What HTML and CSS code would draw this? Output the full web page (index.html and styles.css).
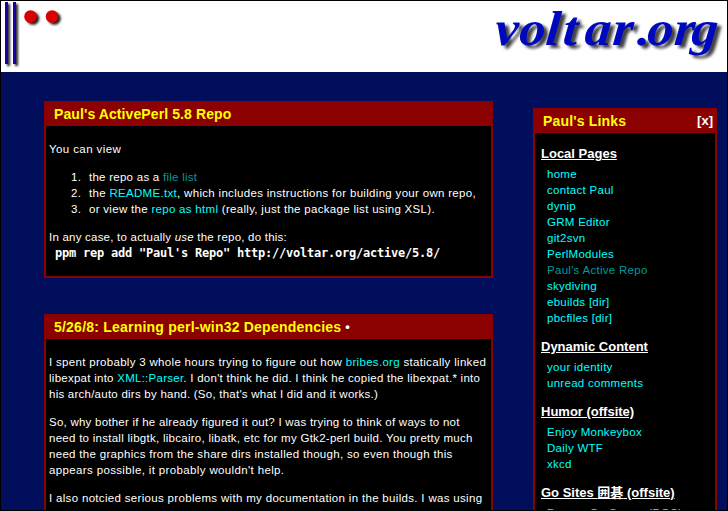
FILE: index.html
```html
<!DOCTYPE html>
<html lang="en">
<head>
<meta charset="utf-8">
<title>voltar.org</title>
<link rel="stylesheet" href="styles.css">
</head>
<body>
<header class="banner">
<svg class="mark" width="70" height="71" viewBox="1 1 70 71" aria-hidden="true">
<defs><filter id="soft"><feGaussianBlur stdDeviation="0.8"/></filter></defs>
<g fill="#222" filter="url(#soft)"><path d="M7 4h3v62H7zM15 4h3v62h-3z"/><circle cx="33" cy="18.500" r="6.300"/><circle cx="54.500" cy="18.500" r="6.300"/></g>
<path fill="#1800a8" d="M5 2h3v62H5zM13 2h3v62h-3z"/>
<g fill="#d80000"><circle cx="30.500" cy="16.500" r="6.300"/><circle cx="52" cy="16.500" r="6.300"/></g>
</svg>
<svg class="logo" width="240" height="71" viewBox="487 1 240 71" role="img" aria-label="voltar.org">
<g class="word">
<text transform="translate(494 45) skewX(-5) scale(1.08 1)" x="0 22.500 47 63 83 109 132 141 166 182">voltar.org</text>
</g>
</svg>
</header>
<div class="page">
<main>
<section class="panel first">
<h2><span class="t1">Paul's ActivePerl 5.8 Repo</span></h2>
<div class="body">
<p><span class="a1">You can view</span></p>
<ol>
<li><span class="a2">the repo as a <a class="seen">file list</a></span></li>
<li><span class="a3">the <a>README.txt</a>, which includes instructions for building your own repo,</span></li>
<li><span class="a4">or view the <a>repo as html</a> (really, just the package list using XSL).</span></li>
</ol>
<p><span class="a5">In any case, to actually <em>use</em> the repo, do this:</span><br><code>ppm rep add "Paul's Repo" http://voltar.org/active/5.8/</code></p>
</div>
</section>
<section class="panel">
<h2><span class="t2">5/26/8: Learning perl-win32 Dependencies</span> <b class="dot">•</b></h2>
<div class="body">
<p><span class="b1">I spent probably 3 whole hours trying to figure out how <a>bribes.org</a> statically linked</span><br>
<span class="b2">libexpat into <a>XML::Parser</a>. I don't think he did. I think he copied the libexpat.* into</span><br>
<span class="b3">his arch/auto dirs by hand. (So, that's what I did and it works.)</span></p>
<p><span class="b4">So, why bother if he already figured it out? I was trying to think of ways to not</span><br>
<span class="b5">need to install libgtk, libcairo, libatk, etc for my Gtk2-perl build. You pretty much</span><br>
<span class="b6">need the graphics from the share dirs installed though, so even though this</span><br>
<span class="b7">appears possible, it probably wouldn't help.</span></p>
<p><span class="b8">I also notcied serious problems with my documentation in the builds. I was using</span></p>
</div>
</section>
</main>
<aside class="panel">
<h2><span class="t3">Paul's Links</span><b class="close">[x]</b></h2>
<div class="links">
<h3>Local Pages</h3>
<ul><li>home</li><li>contact Paul</li><li>dynip</li><li>GRM Editor</li><li>git2svn</li><li>PerlModules</li><li class="seen">Paul's Active Repo</li><li>skydiving</li><li>ebuilds [dir]</li><li>pbcfiles [dir]</li></ul>
<h3>Dynamic Content</h3>
<ul><li>your identity</li><li>unread comments</li></ul>
<h3>Humor (offsite)</h3>
<ul><li>Enjoy Monkeybox</li><li>Daily WTF</li><li>xkcd</li></ul>
<h3>Go Sites <span lang="ja">囲碁</span> (offsite)</h3>
<ul><li>Dragon Go Server (DGS)</li></ul>
</div>
</aside>
</div>
</body>
</html>
```

FILE: styles.css
```css
* { box-sizing: border-box; }
body {
  margin: 0;
  width: 728px;
  height: 511px;
  overflow: hidden;
  border: 1px solid #000;
  background: #000e5c;
  color: #fff;
  font: 11.5px/16px "Liberation Sans", "Noto Sans CJK JP", sans-serif;
  letter-spacing: .28px;
}
.banner { height: 71px; background: #fff; display: flex; justify-content: space-between; }
.logo text {
  font: italic bold 49px "Liberation Serif", serif;
  letter-spacing: 0;
  fill: #0008bd;
}
.word { filter: drop-shadow(4px 3px 1.6px rgba(0, 0, 0, .75)); }
.page { display: flex; align-items: flex-start; height: 438px; overflow: hidden; padding-left: 43px; gap: 40px; }
main { width: 449px; padding-top: 29px; display: flex; flex-direction: column; gap: 36px; }
aside { width: 184px; margin-top: 36px; }
.panel { background: #000; border: 2px solid #8b0000; border-top: 0; }
.first { height: 177px; }
h2 {
  margin: 0;
  height: 25px;
  background: #8b0000;
  color: #ff0;
  font: bold 14px/26px "Liberation Sans", sans-serif;
  letter-spacing: 0;
  padding: 0 2px 0 8px;
  display: flex;
}
.t1 { letter-spacing: .1px; }
.t2 { letter-spacing: .22px; }
.t3 { letter-spacing: .17px; }
.dot { color: #fff; font-size: 13px; margin-left: 4px; }
.close { color: #fff; font-size: 13px; margin-left: auto; }
.body { padding: 15px 3px; white-space: nowrap; }
p { margin: 0 0 12px; }
ol { list-style: none; counter-reset: step; margin: 0 0 12px; padding-left: 22px; }
ol li { counter-increment: step; display: flex; }
ol li::before { content: counter(step) "."; width: 18px; }
a { color: #0ff; }
a.seen, li.seen { color: #009a9a; }
code { font: bold 12px/16px "DejaVu Sans Mono", monospace; letter-spacing: -.224px; margin-left: 6px; }
.a1 { letter-spacing: .4px; }
.a2 { letter-spacing: .26px; }
.a3 { letter-spacing: .31px; }
.a4 { letter-spacing: .3px; }
.a5 { letter-spacing: .22px; }
.b1 { letter-spacing: .31px; }
.b2 { letter-spacing: .26px; }
.b3 { letter-spacing: .24px; }
.b4 { letter-spacing: .24px; }
.b5 { letter-spacing: .27px; }
.b6 { letter-spacing: .31px; }
.b7 { letter-spacing: .36px; }
.b8 { letter-spacing: .32px; }
.links { padding: 13px 6px; white-space: nowrap; }
h3 { margin: 0 0 4px; font: bold 13px/16px "Liberation Sans", "Noto Sans CJK JP", sans-serif; letter-spacing: 0; text-decoration: underline; height: 16px; }
ul { list-style: none; margin: 0 0 13px; padding-left: 6px; color: #0ff; }
```
